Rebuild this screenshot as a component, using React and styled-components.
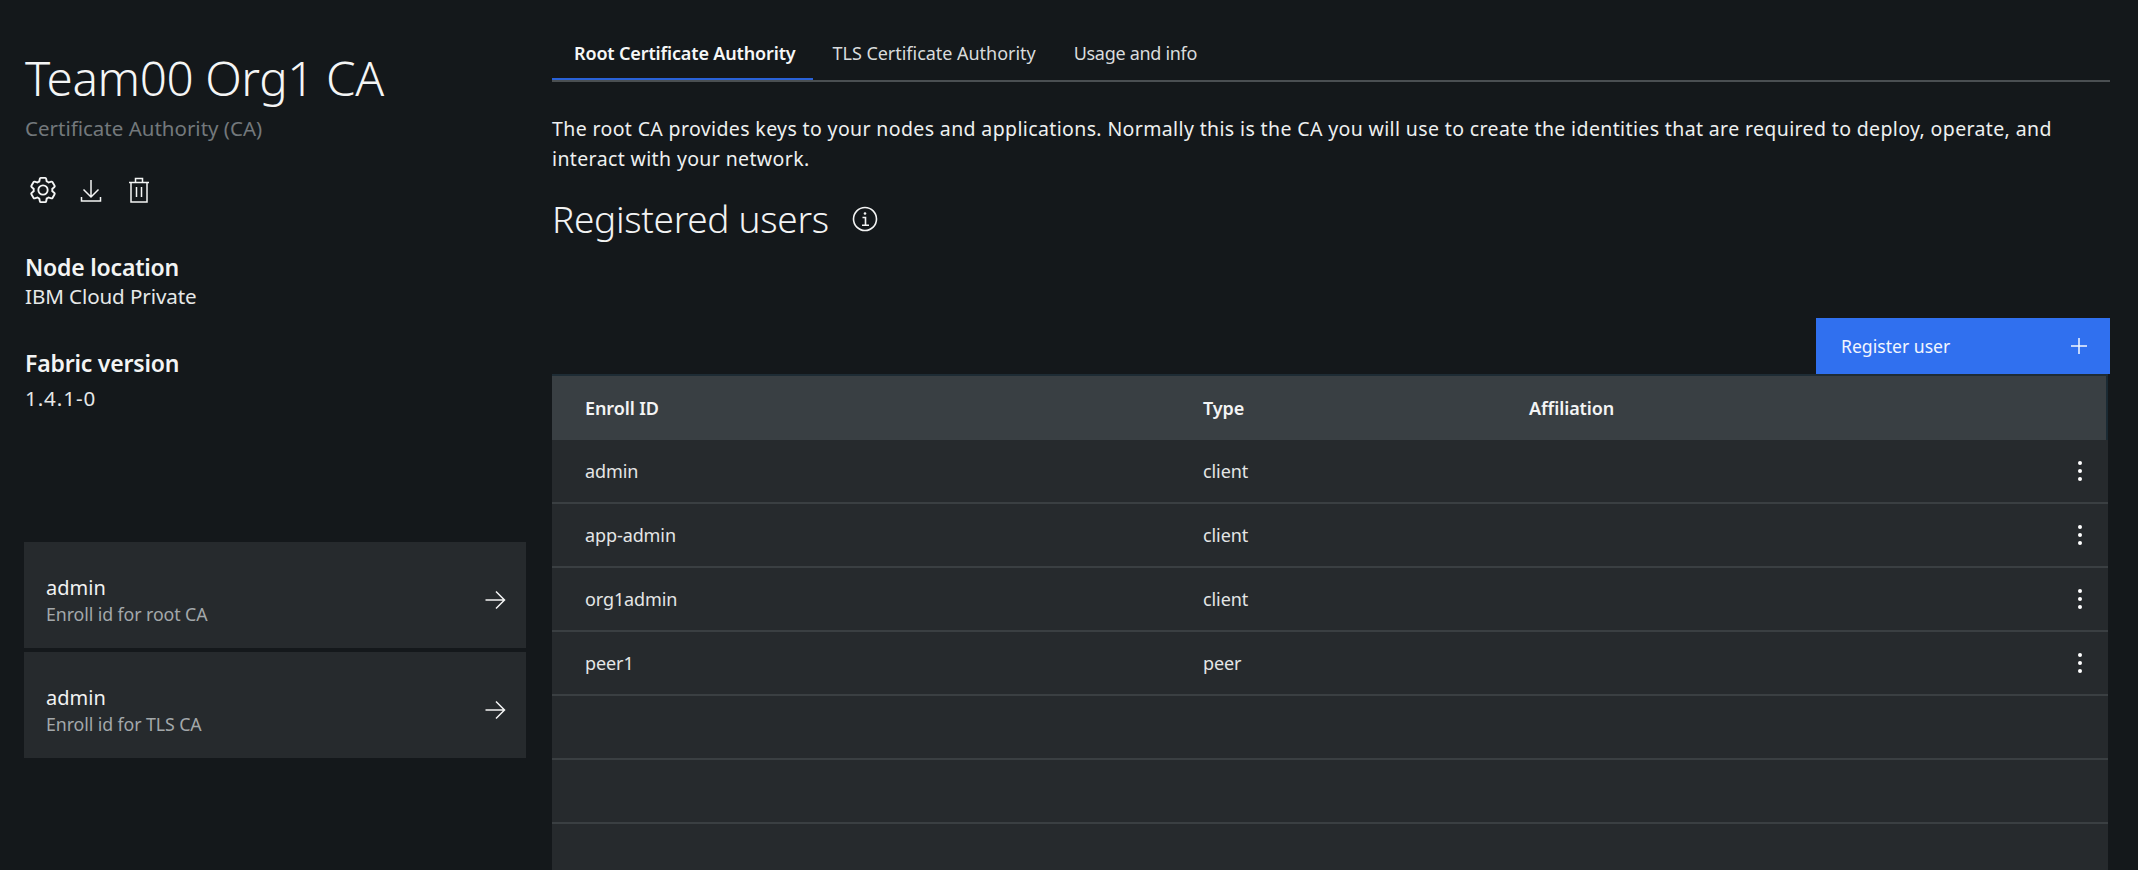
import React from 'react';
import styled, { createGlobalStyle } from 'styled-components';

const GlobalStyle = createGlobalStyle`
  html, body {
    margin: 0;
    height: 870px;
    overflow: hidden;
    background: #14181b;
    color: #f3f4f4;
    font-family: "Noto Sans", "Open Sans", sans-serif;
  }
`;

const Page = styled.div`
  display: flex;
  width: 2138px;
  height: 870px;
  overflow: hidden;
`;

const Sidebar = styled.aside`
  width: 502px;
  margin-left: 24px;
  padding-top: 48px;
  flex-shrink: 0;
`;

const Title = styled.h1`
  margin: 0 0 0 1px;
  font-size: 47.6px;
  line-height: 60px;
  font-weight: 300;
  letter-spacing: -0.4px;
  color: #f4f5f5;
`;

const Subtitle = styled.div`
  margin: 7px 0 0 1px;
  font-size: 20.5px;
  line-height: 26px;
  color: #73787c;
`;

const IconRow = styled.div`
  display: flex;
  gap: 20px;
  margin: 35px 0 0 5px;
`;

const IconSlot = styled.span`
  display: flex;
  width: 28px;
  height: 28px;
  color: #f4f5f5;
`;

const InfoBlock = styled.div`
  margin: ${(p) => p.$top}px 0 0 1px;
`;

const InfoLabel = styled.div`
  font-size: 23px;
  line-height: 28px;
  font-weight: 600;
  letter-spacing: -0.2px;
`;

const InfoValue = styled.div`
  margin-top: ${(p) => p.$gap}px;
  font-size: 20.6px;
  line-height: 28px;
  letter-spacing: ${(p) => p.$spacing || '-0.1px'};
  color: #e6e8e8;
`;

const Cards = styled.div`
  display: flex;
  flex-direction: column;
  gap: 4px;
  margin-top: 130px;
`;

const Card = styled.div`
  display: flex;
  align-items: center;
  justify-content: space-between;
  height: 106px;
  box-sizing: border-box;
  padding: 10px 20px 0 22px;
  background: #262a2d;
`;

const CardName = styled.div`
  font-size: 20px;
  line-height: 28px;
  color: #f1f2f2;
`;

const CardHint = styled.div`
  font-size: 17.8px;
  line-height: 24px;
  letter-spacing: -0.1px;
  color: #a3a8aa;
`;

const Main = styled.main`
  width: 1558px;
  margin-left: 26px;
  flex-shrink: 0;
`;

const Tabs = styled.nav`
  display: flex;
  height: 42px;
  padding-top: 38px;
  border-bottom: 2px solid #4a4f52;
`;

const Tab = styled.div`
  height: 38px;
  padding: 2px ${(p) => p.$pad}px 0 ${(p) => p.$left}px;
  font-size: 18px;
  line-height: 26px;
  letter-spacing: ${(p) => p.$spacing};
  font-weight: ${(p) => (p.$active ? 600 : 400)};
  color: ${(p) => (p.$active ? '#f6f7f7' : '#d9dcdd')};
  border-bottom: ${(p) => (p.$active ? '2px solid #2a62d8' : '2px solid transparent')};
`;

const Intro = styled.p`
  margin: 32px 0 0;
  font-size: 19.5px;
  line-height: 30px;
  letter-spacing: 0.37px;
  color: #eef0f0;
`;

const SectionHead = styled.div`
  display: flex;
  align-items: center;
  gap: 22px;
  margin-top: 20px;
`;

const SectionTitle = styled.h2`
  margin: 0;
  font-size: 37px;
  line-height: 50px;
  font-weight: 300;
  letter-spacing: -0.3px;
  color: #f2f3f3;
`;

const Toolbar = styled.div`
  display: flex;
  justify-content: flex-end;
  margin-top: 74px;
`;

const RegisterButton = styled.button`
  display: flex;
  align-items: center;
  justify-content: space-between;
  width: 294px;
  height: 56px;
  padding: 0 22px 0 25px;
  border: none;
  background: #3070ef;
  color: #f2f6fe;
  font-family: inherit;
  font-size: 17.6px;
`;

const Table = styled.div`
  width: 1556px;
  border-top: 2px solid #1e2c35;
  box-sizing: border-box;
`;

const HeadRow = styled.div`
  display: grid;
  grid-template-columns: 618px 326px 1fr;
  align-items: center;
  height: 64px;
  padding-left: 33px;
  background: #393f43;
  border-right: 2px solid #1b2a33;
  font-size: 18px;
  font-weight: 600;
  letter-spacing: -0.1px;
  color: #f3f4f4;
`;

const Row = styled.div`
  display: grid;
  grid-template-columns: 618px 326px 1fr 56px;
  align-items: center;
  height: 64px;
  padding-left: 33px;
  box-sizing: border-box;
  background: #262a2d;
  border-bottom: 2px solid #3a3f42;
  font-size: 18px;
  letter-spacing: -0.1px;
  color: #e4e6e6;
`;

const Dots = styled.span`
  display: flex;
  flex-direction: column;
  align-items: center;
  gap: 4px;
  width: 4px;
  justify-self: center;

  i {
    width: 4px;
    height: 4px;
    border-radius: 50%;
    background: #fff;
  }
`;

const GearIcon = () => (
  <svg viewBox="1 1 30 30" width="28" height="28" fill="currentColor">
    <path d="M27,16.76c0-.25,0-.5,0-.76s0-.51,0-.77l1.92-1.68A2,2,0,0,0,29.3,11L26.94,7a2,2,0,0,0-1.73-1,2,2,0,0,0-.64.1l-2.43.82a11.35,11.35,0,0,0-1.31-.75l-.51-2.52a2,2,0,0,0-2-1.61H13.64a2,2,0,0,0-2,1.61l-.51,2.52a11.48,11.48,0,0,0-1.32.75L7.43,6.06A2,2,0,0,0,6.79,6,2,2,0,0,0,5.06,7L2.7,11a2,2,0,0,0,.41,2.51L5,15.24c0,.25,0,.5,0,.76s0,.51,0,.77L3.11,18.45A2,2,0,0,0,2.7,21L5.06,25a2,2,0,0,0,1.73,1,2,2,0,0,0,.64-.1l2.43-.82a11.35,11.35,0,0,0,1.31.75l.51,2.52a2,2,0,0,0,2,1.61h4.72a2,2,0,0,0,2-1.61l.51-2.52a11.48,11.48,0,0,0,1.32-.75l2.42.82a2,2,0,0,0,.64.1,2,2,0,0,0,1.73-1L29.3,21a2,2,0,0,0-.41-2.51ZM25.21,24l-3.43-1.16a8.86,8.86,0,0,1-2.71,1.57L18.36,28H13.64l-.71-3.55a9.36,9.36,0,0,1-2.7-1.57L6.79,24,4.43,20l2.72-2.4a8.9,8.9,0,0,1,0-3.13L4.43,12,6.79,8l3.43,1.16a8.86,8.86,0,0,1,2.71-1.57L13.64,4h4.72l.71,3.55a9.36,9.36,0,0,1,2.7,1.57L25.21,8,27.57,12l-2.72,2.4a8.9,8.9,0,0,1,0,3.13L27.57,20Z" />
    <path d="M16,22a6,6,0,1,1,6-6A5.94,5.94,0,0,1,16,22Zm0-10a3.91,3.91,0,0,0-4,4,3.91,3.91,0,0,0,4,4,3.91,3.91,0,0,0,4-4A3.91,3.91,0,0,0,16,12Z" />
  </svg>
);

const DownloadIcon = () => (
  <svg viewBox="0 0 28 28" width="28" height="28" fill="none" stroke="currentColor" strokeWidth="1.5">
    <path d="M14 4v17M6.5 13.5 14 21l7.500-7.500M4.500 21v4h19v-4" />
  </svg>
);

const TrashIcon = () => (
  <svg viewBox="0 0 28 28" width="28" height="28" fill="none" stroke="currentColor" strokeWidth="1.5">
    <path d="M4 6.500h20M6 6.500V26h16V6.500M10.500 6.500V2.500h7v4M11.500 11v10M16.500 11v10" />
  </svg>
);

const ArrowIcon = () => (
  <svg viewBox="0 0 22 22" width="22" height="22" fill="none" stroke="currentColor" strokeWidth="1.5">
    <path d="M1.500 11h19M12 2.500l8.500 8.500-8.500 8.500" />
  </svg>
);

const InfoIcon = () => (
  <svg viewBox="0 0 28 28" width="28" height="28" fill="none" stroke="currentColor" strokeWidth="1.6">
    <circle cx="14" cy="14" r="11.500" />
    <path d="M11.500 12.500H14.500V20M11 20.200h7" />
    <circle cx="14" cy="8.500" r="1.300" fill="currentColor" stroke="none" />
  </svg>
);

const PlusIcon = () => (
  <svg viewBox="0 0 18 18" width="18" height="18" fill="none" stroke="currentColor" strokeWidth="1.5">
    <path d="M9 1v16M1 9h16" />
  </svg>
);

const users = [
  { id: 'admin', type: 'client' },
  { id: 'app-admin', type: 'client' },
  { id: 'org1admin', type: 'client' },
  { id: 'peer1', type: 'peer' },
  {},
  {},
  {},
];

const App = () => (
  <Page>
    <GlobalStyle />
    <Sidebar>
      <Title>Team00 Org1 CA</Title>
      <Subtitle>Certificate Authority (CA)</Subtitle>
      <IconRow>
        <IconSlot><GearIcon /></IconSlot>
        <IconSlot><DownloadIcon /></IconSlot>
        <IconSlot><TrashIcon /></IconSlot>
      </IconRow>
      <InfoBlock $top={49}>
        <InfoLabel>Node location</InfoLabel>
        <InfoValue $gap={1}>IBM Cloud Private</InfoValue>
      </InfoBlock>
      <InfoBlock $top={39}>
        <InfoLabel>Fabric version</InfoLabel>
        <InfoValue $gap={7} $spacing="0.9px">1.4.1-0</InfoValue>
      </InfoBlock>
      <Cards>
        <Card>
          <div>
            <CardName>admin</CardName>
            <CardHint>Enroll id for root CA</CardHint>
          </div>
          <ArrowIcon />
        </Card>
        <Card>
          <div>
            <CardName>admin</CardName>
            <CardHint>Enroll id for TLS CA</CardHint>
          </div>
          <ArrowIcon />
        </Card>
      </Cards>
    </Sidebar>
    <Main>
      <Tabs>
        <Tab $active $left={22} $pad={17} $spacing="-0.15px">Root Certificate Authority</Tab>
        <Tab $left={20} $pad={18} $spacing="-0.03px">TLS Certificate Authority</Tab>
        <Tab $left={20} $pad={18} $spacing="-0.3px">Usage and info</Tab>
      </Tabs>
      <Intro>
        The root CA provides keys to your nodes and applications. Normally this is the CA you will use to create the identities that are required to deploy, operate, and interact with your network.
      </Intro>
      <SectionHead>
        <SectionTitle>Registered users</SectionTitle>
        <InfoIcon />
      </SectionHead>
      <Toolbar>
        <RegisterButton>
          Register user
          <PlusIcon />
        </RegisterButton>
      </Toolbar>
      <Table>
        <HeadRow>
          <span>Enroll ID</span>
          <span>Type</span>
          <span>Affiliation</span>
        </HeadRow>
        {users.map((u, i) => (
          <Row key={i}>
            <span>{u.id}</span>
            <span>{u.type}</span>
            <span />
            {u.id ? <Dots><i /><i /><i /></Dots> : <span />}
          </Row>
        ))}
      </Table>
    </Main>
  </Page>
);

export default App;
